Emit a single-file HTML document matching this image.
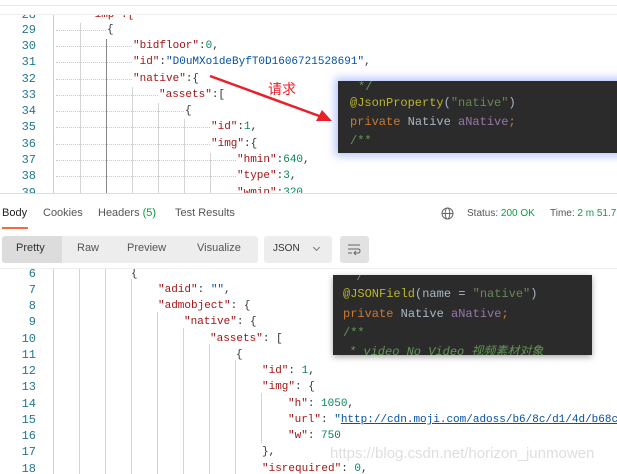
<!DOCTYPE html>
<html><head><meta charset="utf-8"><style>
*{margin:0;padding:0;box-sizing:border-box}
body{width:617px;height:474px;overflow:hidden;background:#fff;position:relative;font-family:"Liberation Sans",sans-serif}
.mono{font-family:"Liberation Mono","DejaVu Sans Mono",monospace;font-size:11px}
.dk{font-size:12px}
.ed{position:absolute;left:0;width:617px;overflow:hidden;background:#fff}
.ln{position:absolute;height:16px;line-height:16px;white-space:pre}
.num{position:absolute;width:36px;text-align:right;color:#237893;font-family:"Liberation Mono",monospace;font-size:12px;height:16px;line-height:16px}
.k{color:#a31515}.s{color:#0451a5}.n{color:#098658}.p{color:#333}
.g{position:absolute;width:1px;background:#d4d4d4}
.dots{position:absolute;height:1px;border-top:1px dotted #c8c8c8}
.tab{position:absolute;top:207px;font-size:11px;color:#555}
</style></head><body>
<div style="position:absolute;top:5px;left:0;width:617px;height:1px;background:#e8e8e8"></div>
<div class="ed" style="top:14px;height:180px;border-top:1px solid #eee;border-bottom:1px solid #ddd">
 <div class="g" style="left:53px;top:0;height:180px;background:#ccc"></div>
 <div class="g" style="left:80px;top:8px;height:172px"></div>
 <div class="g" style="left:106px;top:24px;height:156px;background:#888"></div>
 <div class="g" style="left:132px;top:72px;height:108px"></div>
 <div class="g" style="left:158px;top:88px;height:92px"></div>
 <div class="g" style="left:184px;top:104px;height:76px"></div>
 <div class="g" style="left:210px;top:138px;height:42px"></div>
 <div class="dots" style="left:56px;width:50px;top:15px"></div>
 <div class="dots" style="left:56px;width:76px;top:31px"></div>
 <div class="dots" style="left:56px;width:76px;top:47px"></div>
 <div class="dots" style="left:56px;width:76px;top:64px"></div>
 <div class="dots" style="left:56px;width:102px;top:80px"></div>
 <div class="dots" style="left:56px;width:128px;top:96px"></div>
 <div class="dots" style="left:56px;width:154px;top:112px"></div>
 <div class="dots" style="left:56px;width:154px;top:129px"></div>
 <div class="dots" style="left:56px;width:180px;top:145px"></div>
 <div class="dots" style="left:56px;width:180px;top:161px"></div>
 <div class="dots" style="left:56px;width:180px;top:178px"></div>
 <div class="num" style="top:-8px">28</div>
 <div class="ln mono k" style="left:88px;top:-8px">"imp":[</div>
 <div class="num" style="top:7px">29</div><div class="ln mono p" style="left:107px;top:7px">{</div>
 <div class="num" style="top:23px">30</div><div class="ln mono" style="left:133px;top:23px"><span class="k">"bidfloor"</span><span class="p">:</span><span class="n">0</span><span class="p">,</span></div>
 <div class="num" style="top:39px">31</div><div class="ln mono" style="left:133px;top:39px"><span class="k">"id"</span><span class="p">:</span><span class="s">"D0uMXo1deByfT0D1606721528691"</span><span class="p">,</span></div>
 <div class="num" style="top:56px">32</div><div class="ln mono" style="left:133px;top:56px"><span class="k">"native"</span><span class="p">:{</span></div>
 <div class="num" style="top:72px">33</div><div class="ln mono" style="left:159px;top:72px"><span class="k">"assets"</span><span class="p">:[</span></div>
 <div class="num" style="top:88px">34</div><div class="ln mono p" style="left:185px;top:88px">{</div>
 <div class="num" style="top:104px">35</div><div class="ln mono" style="left:211px;top:104px"><span class="k">"id"</span><span class="p">:</span><span class="n">1</span><span class="p">,</span></div>
 <div class="num" style="top:121px">36</div><div class="ln mono" style="left:211px;top:121px"><span class="k">"img"</span><span class="p">:{</span></div>
 <div class="num" style="top:137px">37</div><div class="ln mono" style="left:237px;top:137px"><span class="k">"hmin"</span><span class="p">:</span><span class="n">640</span><span class="p">,</span></div>
 <div class="num" style="top:153px">38</div><div class="ln mono" style="left:237px;top:153px"><span class="k">"type"</span><span class="p">:</span><span class="n">3</span><span class="p">,</span></div>
 <div class="num" style="top:170px">39</div><div class="ln mono" style="left:237px;top:170px"><span class="k">"wmin"</span><span class="p">:</span><span class="n">320</span></div>
</div>
<div style="position:absolute;left:338px;top:81px;width:290px;height:72px;background:#2b2b2b;box-shadow:0 0 8px 3px rgba(120,150,255,.55)">
 <div class="ln mono dk" style="left:20px;top:-2px;color:#629755">*/</div>
 <div class="ln mono dk" style="left:12px;top:14px"><span style="color:#bbb529">@JsonProperty</span><span style="color:#a9b7c6">(</span><span style="color:#6a8759">"native"</span><span style="color:#a9b7c6">)</span></div>
 <div class="ln mono dk" style="left:12px;top:33px"><span style="color:#cc7832">private</span><span style="color:#a9b7c6"> Native </span><span style="color:#9876aa">aNative</span><span style="color:#cc7832">;</span></div>
 <div class="ln mono dk" style="left:12px;top:52px;color:#629755">/**</div>
</div>
<svg style="position:absolute;left:0;top:0" width="617" height="474">
 <line x1="210" y1="76" x2="322" y2="117" stroke="#e8202a" stroke-width="2.5"/>
 <polygon points="332,121 316,121 322,110" fill="#e8202a"/>
 <line x1="333" y1="313" x2="282" y2="321" stroke="#e8202a" stroke-width="2.5"/>
 <polygon points="270,323 284,315 285,327" fill="#e8202a"/>
</svg>
<div style="position:absolute;left:268px;top:79px;color:#e8202a;font-size:14px;font-family:'Liberation Sans','Noto Sans CJK SC',sans-serif">请求</div>
<div style="position:absolute;left:278px;top:293px;color:#e8202a;font-size:14px;font-family:'Liberation Sans','Noto Sans CJK SC',sans-serif">返回</div>
<div class="tab" style="left:2px;color:#222">Body</div>
<div style="position:absolute;left:2px;top:227px;width:26px;height:2px;background:#f26b3a"></div>
<div class="tab" style="left:43px">Cookies</div>
<div class="tab" style="left:98px">Headers <span style="color:#0a9b42">(5)</span></div>
<div class="tab" style="left:175px">Test Results</div>
<svg style="position:absolute;left:441px;top:207px" width="13" height="13" viewBox="0 0 13 13" fill="none" stroke="#666" stroke-width="1"><circle cx="6.5" cy="6.5" r="5.5"/><ellipse cx="6.5" cy="6.5" rx="2.3" ry="5.5"/><line x1="1" y1="6.5" x2="12" y2="6.5"/></svg>
<div class="tab" style="left:467px;font-size:10px;top:208px">Status: <span style="color:#0a9b42">200 OK</span></div>
<div class="tab" style="left:550px;font-size:10px;top:208px">Time: <span style="color:#0a9b42">2 m 51.7</span></div>
<div style="position:absolute;left:2px;top:236px;width:256px;height:27px;background:#ededed;border-radius:3px"></div>
<div style="position:absolute;left:2px;top:236px;width:60px;height:27px;background:#dcdcdc;border-radius:3px 0 0 3px"></div>
<div class="tab" style="left:16px;top:242px;color:#333">Pretty</div>
<div class="tab" style="left:77px;top:242px">Raw</div>
<div class="tab" style="left:127px;top:242px">Preview</div>
<div class="tab" style="left:197px;top:242px">Visualize</div>
<div style="position:absolute;left:264px;top:236px;width:68px;height:27px;background:#ededed;border-radius:3px"></div>
<div class="tab" style="left:273px;top:243px;font-size:10px;color:#333">JSON</div>
<div style="position:absolute;left:314px;top:245px;width:5px;height:5px;border-right:1px solid #777;border-bottom:1px solid #777;transform:rotate(45deg)"></div>
<div style="position:absolute;left:340px;top:236px;width:29px;height:27px;background:#e2e2e2;border-radius:3px"></div>
<svg style="position:absolute;left:347px;top:243px" width="14" height="13" fill="none" stroke="#666" stroke-width="1"><line x1="1" y1="2" x2="13" y2="2"/><line x1="1" y1="6" x2="11" y2="6"/><path d="M11 6 q2 0 2 2 q0 2 -2 2 h-4"/><path d="M9 8 l-2 2 l2 2"/><line x1="1" y1="10" x2="5" y2="10"/></svg>
<div class="ed" style="top:268px;height:206px;border-top:1px solid #eee">
 <div class="g" style="left:53px;top:0;height:206px"></div>
 <div class="g" style="left:79px;top:0;height:206px"></div>
 <div class="g" style="left:105px;top:0;height:206px"></div>
 <div class="g" style="left:131px;top:10px;height:196px"></div>
 <div class="g" style="left:157px;top:43px;height:163px"></div>
 <div class="g" style="left:183px;top:59px;height:147px"></div>
 <div class="g" style="left:209px;top:75px;height:131px"></div>
 <div class="g" style="left:235px;top:91px;height:115px"></div>
 <div class="g" style="left:261px;top:124px;height:50px"></div>
 <div class="num" style="top:-3px">6</div><div class="ln mono p" style="left:131px;top:-3px">{</div>
 <div class="num" style="top:13px">7</div><div class="ln mono" style="left:158px;top:13px"><span class="k">"adid"</span><span class="p">: </span><span class="s">""</span><span class="p">,</span></div>
 <div class="num" style="top:29px">8</div><div class="ln mono" style="left:158px;top:29px"><span class="k">"admobject"</span><span class="p">: {</span></div>
 <div class="num" style="top:45px">9</div><div class="ln mono" style="left:184px;top:45px"><span class="k">"native"</span><span class="p">: {</span></div>
 <div class="num" style="top:62px">10</div><div class="ln mono" style="left:210px;top:62px"><span class="k">"assets"</span><span class="p">: [</span></div>
 <div class="num" style="top:78px">11</div><div class="ln mono p" style="left:236px;top:78px">{</div>
 <div class="num" style="top:94px">12</div><div class="ln mono" style="left:262px;top:94px"><span class="k">"id"</span><span class="p">: </span><span class="n">1</span><span class="p">,</span></div>
 <div class="num" style="top:110px">13</div><div class="ln mono" style="left:262px;top:110px"><span class="k">"img"</span><span class="p">: {</span></div>
 <div class="num" style="top:127px">14</div><div class="ln mono" style="left:288px;top:127px"><span class="k">"h"</span><span class="p">: </span><span class="n">1050</span><span class="p">,</span></div>
 <div class="num" style="top:143px">15</div><div class="ln mono" style="left:288px;top:143px"><span class="k">"url"</span><span class="p">: </span><span class="s">"<u>http://cdn.moji.com/adoss/b6/8c/d1/4d/b68cc</u></span></div>
 <div class="num" style="top:159px">16</div><div class="ln mono" style="left:288px;top:159px"><span class="k">"w"</span><span class="p">: </span><span class="n">750</span></div>
 <div class="num" style="top:175px">17</div><div class="ln mono p" style="left:262px;top:175px">},</div>
 <div class="num" style="top:192px">18</div><div class="ln mono" style="left:262px;top:192px"><span class="k">"isrequired"</span><span class="p">: </span><span class="n">0</span><span class="p">,</span></div>
</div>
<div style="position:absolute;left:330px;top:445px;font-size:15px;color:rgba(200,200,200,.6)">https://blog.csdn.net/horizon_junmowen</div>
<div style="position:absolute;left:333px;top:275px;width:259px;height:80px;background:#2b2b2b;overflow:hidden;box-shadow:0 2px 6px rgba(0,0,0,.35)">
 <div class="ln mono dk" style="left:16px;top:-6px;color:#629755">*/</div>
 <div class="ln mono dk" style="left:10px;top:11px"><span style="color:#bbb529">@JSONField</span><span style="color:#a9b7c6">(name = </span><span style="color:#6a8759">"native"</span><span style="color:#a9b7c6">)</span></div>
 <div class="ln mono dk" style="left:10px;top:31px"><span style="color:#cc7832">private</span><span style="color:#a9b7c6"> Native </span><span style="color:#9876aa">aNative</span><span style="color:#cc7832">;</span></div>
 <div class="ln mono dk" style="left:10px;top:50px;color:#629755">/**</div>
 <div class="ln mono dk" style="left:16px;top:69px;color:#629755;font-style:italic;font-family:'Liberation Mono','Noto Sans CJK SC',monospace">* video No Video 视频素材对象</div>
</div>
</body></html>
